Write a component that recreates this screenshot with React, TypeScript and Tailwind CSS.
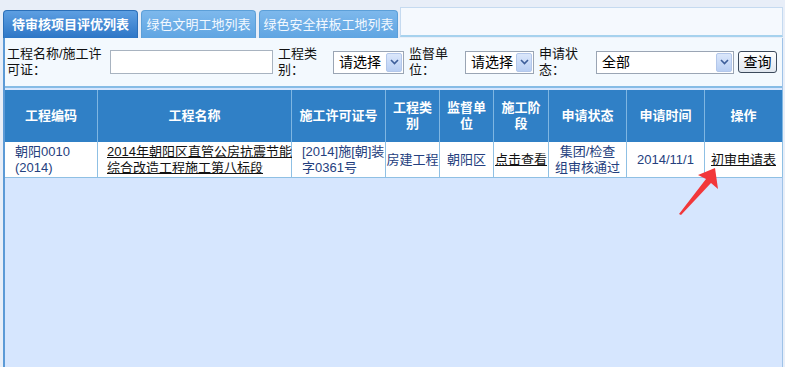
import React from 'react';

const font = { fontFamily: '"Liberation Sans", "Noto Sans CJK SC", sans-serif' };

function Select({ label, width }: { label: string; width: string }) {
  return (
    <div className={`shrink-0 flex items-center h-[23px] bg-white border border-[#9aa5b4] ${width}`}>
      <span className="flex-1 pl-[5px] text-[14px] text-black leading-none whitespace-nowrap">{label}</span>
      <span className="w-[16px] h-[19px] mr-[1px] flex items-center justify-center bg-gradient-to-b from-[#dbe7fb] to-[#b9cff3] border border-[#b3c7ea] rounded-[2px]">
        <svg width="9" height="6" viewBox="0 0 9 6">
          <path d="M1 1 L4.5 4.5 L8 1" stroke="#3d5f9a" strokeWidth="1.6" fill="none" />
        </svg>
      </span>
    </div>
  );
}

const headers: { label: React.ReactNode; w: string }[] = [
  { label: '工程编码', w: 'w-[93px]' },
  { label: '工程名称', w: 'w-[194px]' },
  { label: '施工许可证号', w: 'w-[94px]' },
  { label: <>工程类<br />别</>, w: 'w-[54px]' },
  { label: <>监督单<br />位</>, w: 'w-[54px]' },
  { label: <>施工阶<br />段</>, w: 'w-[55px]' },
  { label: '申请状态', w: 'w-[78px]' },
  { label: '申请时间', w: 'w-[78px]' },
  { label: '操作', w: 'w-[78px]' },
];

const cell = 'shrink-0 flex items-center border-r border-[#8fc0e4] whitespace-nowrap';

export default function App() {
  return (
    <div className="relative w-[785px] h-[367px] overflow-hidden bg-[#e8eef8] flex flex-col" style={font}>
      {/* Tabs */}
      <div className="flex items-end h-[38px] pl-[3px] pr-[2px] pt-[7px]">
        <div className="shrink-0 h-[28px] w-[135px] rounded-t-[4px] bg-gradient-to-b from-[#5d9fe2] to-[#2d76c6] border border-[#2b6fb8] border-b-0 flex items-center justify-center text-white font-bold text-[13px]">
          待审核项目评优列表
        </div>
        <div className="shrink-0 ml-[3px] h-[28px] w-[115px] rounded-t-[4px] bg-gradient-to-b from-[#7db8ec] to-[#5fa5e2] border border-[#5c9fd8] border-b-0 flex items-center justify-center text-[#f2f8ff] text-[13px]">
          绿色文明工地列表
        </div>
        <div className="shrink-0 ml-[3px] h-[28px] w-[139px] rounded-t-[4px] bg-gradient-to-b from-[#7db8ec] to-[#5fa5e2] border border-[#5c9fd8] border-b-0 flex items-center justify-center text-[#f2f8ff] text-[13px]">
          绿色安全样板工地列表
        </div>
        <div className="self-stretch flex-1 ml-[2px] mb-[1px] bg-[#f5f9fe] border border-[#c5daf0] border-b-2 border-b-[#a6d2ee]" />
      </div>

      {/* Panel */}
      <div className="flex-1 ml-[3px] mr-[2px] border-l-2 border-l-[#5c9ad6] border-r border-r-[#9fc3e8] bg-[#d6e6fe] flex flex-col">
        {/* Filter */}
        <div className="h-[50px] bg-[#f3f9fe] border-b-2 border-[#86bce6] flex items-center text-[13px] leading-[16px] text-[#111]">
          <div className="shrink-0 w-[105px] pl-[2px] whitespace-nowrap">工程名称/施工许<br />可证：</div>
          <div className="shrink-0 w-[163px] h-[24px] bg-white border border-[#a8b3c0]" />
          <div className="shrink-0 w-[60px] pl-[5px] whitespace-nowrap">工程类<br />别：</div>
          <Select label="请选择" width="w-[71px]" />
          <div className="shrink-0 w-[61px] pl-[5px] whitespace-nowrap">监督单<br />位：</div>
          <Select label="请选择" width="w-[69px]" />
          <div className="shrink-0 w-[62px] pl-[5px] whitespace-nowrap">申请状<br />态：</div>
          <Select label="全部" width="w-[138px]" />
          <button className="shrink-0 ml-[4px] h-[22px] w-[39px] rounded-[3px] border border-[#3c4a5c] bg-gradient-to-b from-[#ffffff] to-[#dfe6ee] text-[14px] text-black leading-none">
            查询
          </button>
        </div>

        {/* Table */}
        <div className="mt-[2px] flex flex-col">
          <div className="flex h-[52px] bg-[#3080c6] text-white font-bold text-[13px] leading-[16px]">
            {headers.map((h, i) => (
              <div key={i} className={`${h.w} shrink-0 flex items-center justify-center text-center border-r border-[#7fb6e2]`}>
                <span>{h.label}</span>
              </div>
            ))}
          </div>
          <div className="flex h-[36px] bg-white text-[13px] leading-[16px] text-[#24407e] border-b border-[#8fc0e4]">
            <div className={`${cell} w-[93px] pl-[10px]`}>
              <span>朝阳0010<br />(2014)</span>
            </div>
            <div className={`${cell} w-[194px] pl-[9px]`}>
              <span className="underline text-[#111]">2014年朝阳区直管公房抗震节能<br />综合改造工程施工第八标段</span>
            </div>
            <div className={`${cell} w-[94px] pl-[10px]`}>
              <span>[2014]施[朝]装<br />字0361号</span>
            </div>
            <div className={`${cell} w-[54px] justify-center`}><span>房建工程</span></div>
            <div className={`${cell} w-[54px] justify-center`}><span>朝阳区</span></div>
            <div className={`${cell} w-[55px] justify-center`}>
              <span className="underline text-[#111]">点击查看</span>
            </div>
            <div className={`${cell} w-[78px] justify-center text-center`}>
              <span>集团/检查<br />组审核通过</span>
            </div>
            <div className={`${cell} w-[78px] justify-center`}><span>2014/11/1</span></div>
            <div className={`${cell} w-[78px] justify-center`}>
              <span className="underline text-[#111]">初审申请表</span>
            </div>
          </div>
        </div>
      </div>

      {/* Red arrow annotation */}
      <svg className="absolute left-[674px] top-[164px]" width="50" height="56" viewBox="0 0 50 56">
        <path d="M41 4 L44 25 L37 19 L7 51 L5 50 L32 15 L24 11 Z" fill="#f2373a" />
      </svg>
    </div>
  );
}
